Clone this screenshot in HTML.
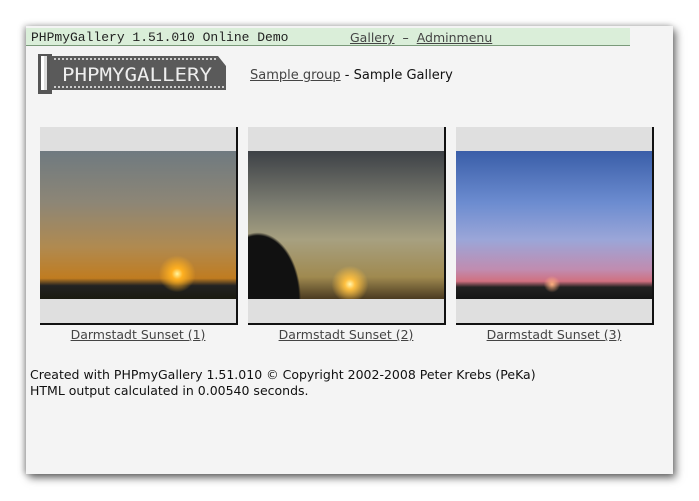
<!DOCTYPE html>
<html><head><meta charset="utf-8"><style>
body{margin:0;width:699px;height:501px;background:#fff;position:relative;overflow:hidden;font-family:"DejaVu Sans","Liberation Sans",sans-serif;}
.panel{position:absolute;left:26px;top:26px;width:647px;height:448px;background:#f4f4f4;box-shadow:3px 4px 8px rgba(0,0,0,.55),-2px 0 6px rgba(0,0,0,.3);}
.hdr{position:absolute;left:0;top:2px;width:604px;height:17px;background:#daeed9;border-bottom:1px solid #7a9a7a;}
.hdr .t{position:absolute;left:5px;top:2px;font-family:"Liberation Mono",monospace;font-size:13px;color:#222;}
.hdr .n{position:absolute;left:324px;top:2px;font-size:12.5px;color:#333;}
a{color:#444;text-decoration:underline;}
.crumb{position:absolute;left:224px;top:42px;font-size:13px;color:#111;}
.card{position:absolute;top:101px;width:196px;height:196px;background:#dfdfdf;border-right:2px solid #111;border-bottom:2px solid #111;}
.img{position:absolute;left:0;top:24px;width:196px;height:148px;}
.cap{position:absolute;top:301px;width:198px;text-align:center;font-size:12.5px;}
.foot{position:absolute;left:4px;top:341px;font-size:12.5px;line-height:16px;color:#111;}
</style></head><body>
<div class="panel">
<div class="hdr"><span class="t">PHPmyGallery 1.51.010 Online Demo</span><span class="n"><a>Gallery</a> &nbsp;–&nbsp; <a>Adminmenu</a></span></div>
<svg style="position:absolute;left:10px;top:26px" width="195" height="44" viewBox="0 0 195 44">
<rect x="2" y="2" width="14" height="40" fill="#555"/><rect x="5" y="4" width="6" height="34" fill="#ddd"/><rect x="5" y="4" width="3" height="34" fill="#fff"/>
<path d="M14 4 H182 L190 14 V38 H14 Z" fill="#5a5a5a"/>
<path d="M18 7 H180" stroke="#ccc" stroke-width="2" stroke-dasharray="2 2"/>
<path d="M18 35 H188" stroke="#ccc" stroke-width="2" stroke-dasharray="2 2"/>
<text x="26" y="29" font-family="DejaVu Sans Mono,monospace" font-size="19" fill="#eee" textLength="150" lengthAdjust="spacingAndGlyphs">PHPMYGALLERY</text>
</svg>
<div class="crumb"><a>Sample group</a> - Sample Gallery</div>
<div class="card" style="left:14px"><div class="img" style="background:radial-gradient(circle at 70% 83%,#fff6a0 0,#ffb020 3%,transparent 10%),linear-gradient(#6f7a80 0%,#8d8676 35%,#b08a50 65%,#c07c20 86%,#222 91%,#1a1a10 100%)"></div></div>
<div class="card" style="left:222px"><div class="img" style="background:radial-gradient(circle at 52% 90%,#fff6b0 0,#ffc040 3%,transparent 11%),radial-gradient(ellipse 22% 45% at 5% 100%,#111 0,#111 95%,transparent 100%),linear-gradient(#3d4146 0%,#7a7b70 35%,#a7a080 60%,#a08a50 85%,#4a3a20 100%)"></div></div>
<div class="card" style="left:430px"><div class="img" style="background:radial-gradient(circle at 49% 90%,#ffb080 0,transparent 5%),linear-gradient(#3a5ea8 0%,#6c8cd0 35%,#9ba6d8 60%,#c08cb0 80%,#d07080 88%,#222 92%,#151515 100%)"></div></div>
<div class="cap" style="left:13px"><a>Darmstadt Sunset (1)</a></div>
<div class="cap" style="left:221px"><a>Darmstadt Sunset (2)</a></div>
<div class="cap" style="left:429px"><a>Darmstadt Sunset (3)</a></div>
<div class="foot">Created with PHPmyGallery 1.51.010 © Copyright 2002-2008 Peter Krebs (PeKa)<br>HTML output calculated in 0.00540 seconds.</div>
</div>
</body></html>
